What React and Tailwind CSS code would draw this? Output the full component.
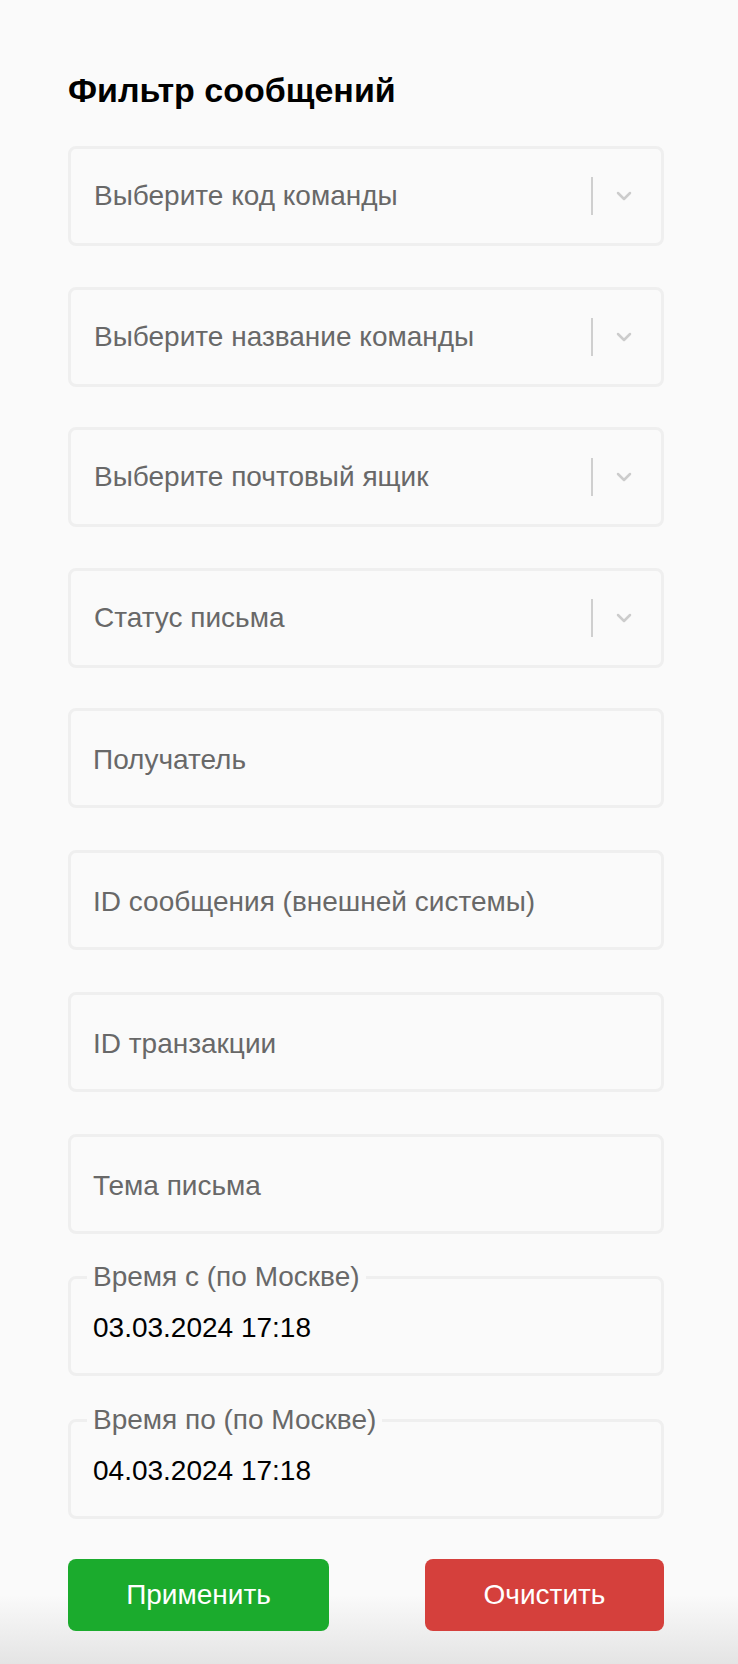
const selects = [
  "Выберите код команды",
  "Выберите название команды",
  "Выберите почтовый ящик",
  "Статус письма",
];

const inputs = [
  "Получатель",
  "ID сообщения (внешней системы)",
  "ID транзакции",
  "Тема письма",
];

const dates = [
  { label: "Время с (по Москве)", value: "03.03.2024 17:18" },
  { label: "Время по (по Москве)", value: "04.03.2024 17:18" },
];

const Chevron = () => (
  <svg width="16" height="10" viewBox="0 0 16 10" fill="none">
    <path d="M2 2l6 6 6-6" stroke="#cccccc" strokeWidth="2.5" strokeLinecap="round" strokeLinejoin="round" />
  </svg>
);

const SelectBox = ({ placeholder }) => (
  <div className="h-[100px] border-[3px] border-[#efefef] rounded-[8px] flex items-center pl-[23px] pr-[7px]">
    <span className="flex-1 text-[28px] leading-[28px] text-[#686868]">{placeholder}</span>
    <div className="w-[2px] h-[38px] bg-[#cfcfcf]" />
    <div className="w-[61px] flex justify-center">
      <Chevron />
    </div>
  </div>
);

const InputBox = ({ placeholder }) => (
  <div className="h-[100px] border-[3px] border-[#efefef] rounded-[8px] flex items-center pl-[22px] pt-[4px]">
    <span className="text-[28px] leading-[28px] text-[#686868]">{placeholder}</span>
  </div>
);

const DateBox = ({ label, value }) => (
  <div className="relative h-[100px] border-[3px] border-[#efefef] rounded-[8px] flex items-center pl-[22px] pt-[4px]">
    <span className="absolute left-[16px] top-[-16px] px-[6px] bg-[#fafafa] text-[28px] leading-[28px] text-[#686868]">
      {label}
    </span>
    <span className="text-[28px] leading-[28px] text-black">{value}</span>
  </div>
);

export default function App() {
  return (
    <div
      className="min-h-[1664px] bg-[linear-gradient(to_bottom,#fafafa_1595px,#e4e4e4_1664px)] pt-[73px]"
      style={{ fontFamily: '"Liberation Sans", Arial, sans-serif' }}
    >
      <div className="ml-[68px] w-[596px] flex flex-col">
        <h1 className="text-[34px] leading-[34px] font-bold text-black">Фильтр сообщений</h1>

        <div className="mt-[39px] flex flex-col gap-[40.5px]">
          {selects.map((s) => (
            <SelectBox key={s} placeholder={s} />
          ))}
        </div>

        <div className="mt-[40.5px] flex flex-col gap-[42px]">
          {inputs.map((s) => (
            <InputBox key={s} placeholder={s} />
          ))}
        </div>

        <div className="mt-[41.5px] flex flex-col gap-[43px]">
          {dates.map((d) => (
            <DateBox key={d.label} label={d.label} value={d.value} />
          ))}
        </div>

        <div className="mt-[40px] flex justify-between">
          <button className="w-[261px] h-[72px] rounded-[8px] bg-[#1bab2d] text-white text-[28px]">
            Применить
          </button>
          <button className="w-[239px] h-[72px] rounded-[8px] bg-[#d5403c] text-white text-[28px]">
            Очистить
          </button>
        </div>
      </div>
    </div>
  );
}
